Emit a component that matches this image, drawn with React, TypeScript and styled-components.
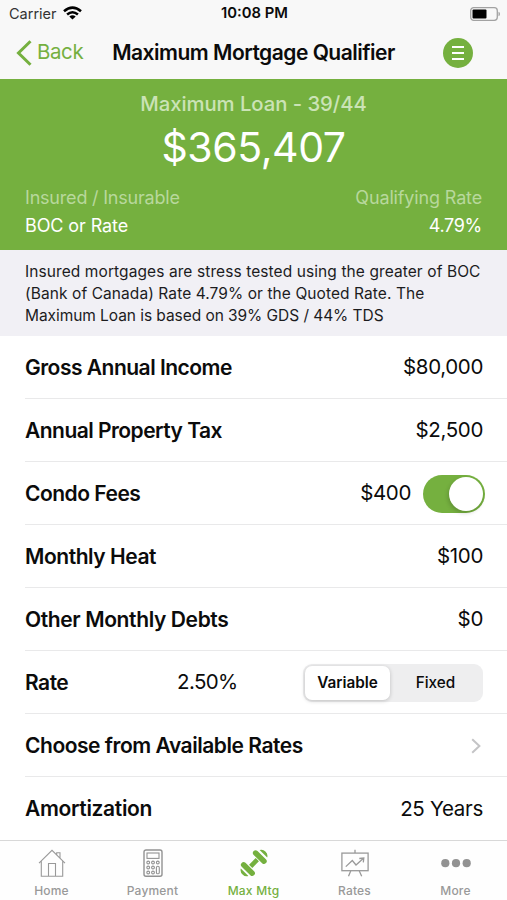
import React from "react";
import styled, { createGlobalStyle } from "styled-components";

const GREEN = "#75b03f";

const GlobalStyle = createGlobalStyle`
  *, *::before, *::after { box-sizing: border-box; }
  body { margin: 0; background: #fff; }
`;

const Screen = styled.div`
  width: 507px;
  height: 900px;
  display: flex;
  flex-direction: column;
  overflow: hidden;
  background: #fff;
  color: #0b0b0b;
  font-family: Inter, "Liberation Sans", sans-serif;
`;

const Text = styled.span<{
  $size: number;
  $weight?: number;
  $spacing?: number;
  $color?: string;
  $line?: number;
}>`
  font-size: ${(p) => p.$size}px;
  font-weight: ${(p) => p.$weight ?? 400};
  letter-spacing: ${(p) => p.$spacing ?? 0}px;
  color: ${(p) => p.$color ?? "inherit"};
  line-height: ${(p) => (p.$line ? `${p.$line}px` : "1.2")};
  white-space: nowrap;
`;

const StatusBar = styled.div`
  height: 27px;
  flex: none;
  display: grid;
  grid-template-columns: 1fr auto 1fr;
  align-items: center;
  padding: 0 7px 0 9px;
  background: #f8f8f8;
`;

const Carrier = styled.div`
  display: flex;
  align-items: center;
  gap: 6px;
`;

const BatterySlot = styled.div`
  display: flex;
  justify-content: flex-end;
`;

const NavBar = styled.header`
  height: 52px;
  flex: none;
  display: grid;
  grid-template-columns: 98px 1fr 98px;
  align-items: center;
  padding-bottom: 1px;
  background: #f8f8f8;
`;

const BackButton = styled.button`
  display: flex;
  align-items: center;
  gap: 5px;
  padding: 0 0 0 16px;
  border: 0;
  background: none;
  font-family: inherit;
  color: ${GREEN};
`;

const Title = styled.h1`
  margin: 0;
  display: flex;
  justify-content: center;
`;

const MenuButton = styled.button`
  justify-self: center;
  width: 30px;
  height: 30px;
  padding: 0;
  border: 0;
  border-radius: 50%;
  background: ${GREEN};
  display: flex;
  flex-direction: column;
  align-items: center;
  justify-content: center;
  gap: 4px;
`;

const MenuBar = styled.span`
  width: 12px;
  height: 2px;
  background: #fff;
`;

const Summary = styled.section`
  height: 171px;
  flex: none;
  display: flex;
  flex-direction: column;
  align-items: center;
  padding: 12px 25px 0;
  background: ${GREEN};
  color: #fff;
`;

const Amount = styled.div`
  display: flex;
  padding-top: 3px;
`;

const SummaryGrid = styled.div`
  width: 100%;
  margin-top: 10px;
  display: grid;
  grid-template-columns: auto auto;
  justify-content: space-between;

  & > :nth-child(even) { justify-self: end; }
`;

const Note = styled.section`
  height: 86px;
  flex: none;
  display: flex;
  flex-direction: column;
  align-items: flex-start;
  padding: 11px 25px 0;
  background: #f1f0f5;
  color: #1c1c1e;
`;

const List = styled.main`
  flex: none;
  padding-left: 25px;
`;

const Row = styled.div`
  height: 63px;
  display: flex;
  align-items: center;
  padding: 1px 24px 0 0;
  border-bottom: 1px solid #e9e9ea;

  &:last-child { border-bottom: 0; }
`;

const Spacer = styled.div`
  flex: 1;
`;

const RateValue = styled.div`
  width: 126px;
  display: flex;
`;

const Toggle = styled.div`
  width: 62px;
  height: 38px;
  margin: 0 -2px 0 12px;
  padding: 2px;
  border-radius: 19px;
  background: ${GREEN};
  display: flex;
  justify-content: flex-end;
`;

const Knob = styled.div`
  width: 34px;
  height: 34px;
  border-radius: 50%;
  background: #fff;
  box-shadow: -1px 2px 4px rgba(0, 0, 0, 0.18);
`;

const Segmented = styled.div`
  width: 180px;
  height: 38px;
  padding: 2px;
  border-radius: 9px;
  background: #eeeeef;
  display: grid;
  grid-template-columns: 85px 1fr;
`;

const Segment = styled.div<{ $active?: boolean }>`
  display: flex;
  align-items: center;
  justify-content: center;
  padding-top: 1px;
  border-radius: 7px;
  background: ${(p) => (p.$active ? "#fff" : "transparent")};
  box-shadow: ${(p) => (p.$active ? "0 1px 4px rgba(0, 0, 0, 0.2)" : "none")};
`;

const TabBar = styled.nav`
  height: 60px;
  flex: none;
  display: grid;
  grid-template-columns: repeat(5, 101px);
  justify-content: center;
  border-top: 1px solid #d8d8d8;
  background: #fefefe;
`;

const Tab = styled.div<{ $active?: boolean }>`
  display: flex;
  flex-direction: column;
  align-items: center;
  padding-top: 8px;
  gap: 6px;
  color: ${(p) => (p.$active ? GREEN : "#999")};
`;

const WifiIcon = () => (
  <svg width="19" height="14" viewBox="0 0 19 14" fill="none" stroke="#000" strokeWidth="2.6">
    <path d="M1 5.2Q9.5-2 18 5.2" />
    <path d="M4.1 8.5Q9.5 4 14.9 8.5" />
    <path d="M9.5 13.6L6.3 10.5Q9.5 8 12.7 10.5Z" fill="#000" stroke="none" />
  </svg>
);

const BatteryIcon = () => (
  <svg width="30" height="14" viewBox="0 0 30 14">
    <rect x="0.7" y="0.7" width="26.6" height="12.6" rx="3" fill="none" stroke="#a2a2a2" strokeWidth="1.3" />
    <rect x="2.5" y="2.4" width="14" height="9.2" rx="1" fill="#000" />
    <path d="M28.5 4.7Q30 5.2 30 7T28.5 9.3Z" fill="#a2a2a2" />
  </svg>
);

const BackIcon = () => (
  <svg width="16" height="26" viewBox="0 0 16 26" fill="none" stroke={GREEN} strokeWidth="3">
    <path d="M14.5 1.3L2.5 13L14.5 24.7" />
  </svg>
);

const ChevronIcon = () => (
  <svg width="12" height="16" viewBox="0 0 12 16" fill="none" stroke="#c4c4c6" strokeWidth="2">
    <path d="M1.2 1.2L8.4 8L1.2 14.8" />
  </svg>
);

const HomeIcon = () => (
  <svg width="28" height="28" viewBox="0 0 28 28" fill="none" stroke="#999" strokeWidth="1.1">
    <path d="M1 14.2L14 1.3L27 14.2M3.3 12.2V27.3H24.7V12.2M18.7 6V3.8H22V9.2M10.5 27V14.5H17.5V27" />
  </svg>
);

const CalculatorIcon = () => (
  <svg width="28" height="28" viewBox="0 0 28 28" fill="none" stroke="#929292" strokeWidth="1.1">
    <rect x="5" y="1" width="18" height="26.3" rx="2" strokeWidth="1.4" />
    <rect x="8" y="4" width="12" height="5.4" />
    <circle cx="9.2" cy="13.5" r="1.4" />
    <circle cx="14" cy="13.5" r="1.4" />
    <circle cx="18.8" cy="13.5" r="1.4" />
    <circle cx="9.2" cy="18.5" r="1.4" />
    <circle cx="14" cy="18.5" r="1.4" />
    <circle cx="9.2" cy="23.5" r="1.4" />
    <circle cx="14" cy="23.5" r="1.4" />
    <rect x="17.4" y="17.3" width="2.9" height="7.5" rx="1.4" />
  </svg>
);

const DumbbellIcon = () => (
  <svg width="28" height="28" viewBox="0 0 28 28" fill="none" stroke={GREEN} strokeLinecap="round">
    <path d="M15.6 4L24 12.2M3.6 15.8L12.2 24.2" strokeWidth="5.4" />
    <path d="M10.7 17.3L17.3 10.7" strokeWidth="4.6" strokeLinecap="butt" />
    <path d="M19.6 1Q23-.2 25.4 2.6Q28.2 5 27.2 8.6ZM.8 19.4Q-.2 23 2.6 25.4Q5 28 8.4 27Z" fill={GREEN} stroke="none" />
  </svg>
);

const ChartBoardIcon = () => (
  <svg width="28" height="28" viewBox="0 0 28 28" fill="none" stroke="#999" strokeWidth="1.3">
    <rect x="0.9" y="4.1" width="26.2" height="17.6" />
    <path d="M14 0.8V4M9.7 22L7.5 27.2M18.3 22L20.7 27.2M4.8 17.6L11.3 11.5L15 16L22.5 9.2M18.3 9.5L22.8 9L22.3 13.3" />
  </svg>
);

const MoreIcon = () => (
  <svg width="30" height="28" viewBox="0 0 30 28" fill="#929292">
    <circle cx="4.3" cy="14.2" r="4.1" />
    <circle cx="15" cy="14.2" r="4.1" />
    <circle cx="25.7" cy="14.2" r="4.1" />
  </svg>
);

const Label = ({ children, spacing = -0.5 }: { children: string; spacing?: number }) => (
  <Text $size={21} $weight={600} $spacing={spacing}>{children}</Text>
);

const Value = ({ children, spacing = -0.35 }: { children: string; spacing?: number }) => (
  <Text $size={20.5} $spacing={spacing}>{children}</Text>
);

const tabs = [
  { name: "Home", icon: <HomeIcon /> },
  { name: "Payment", icon: <CalculatorIcon /> },
  { name: "Max Mtg", icon: <DumbbellIcon />, active: true },
  { name: "Rates", icon: <ChartBoardIcon /> },
  { name: "More", icon: <MoreIcon /> },
];

export default function App() {
  return (
    <>
      <GlobalStyle />
      <Screen>
        <StatusBar>
          <Carrier>
            <Text $size={14.5} $color="#333">Carrier</Text>
            <WifiIcon />
          </Carrier>
          <Text $size={14.8} $weight={600}>10:08 PM</Text>
          <BatterySlot><BatteryIcon /></BatterySlot>
        </StatusBar>
        <NavBar>
          <BackButton>
            <BackIcon />
            <Text $size={20.5} $spacing={-0.4}>Back</Text>
          </BackButton>
          <Title>
            <Text $size={21} $weight={600} $spacing={-0.5}>Maximum Mortgage Qualifier</Text>
          </Title>
          <MenuButton aria-label="Menu">
            <MenuBar /><MenuBar /><MenuBar />
          </MenuButton>
        </NavBar>
        <Summary>
          <Text $size={20.3} $weight={500} $line={26} $spacing={-0.05} $color="#cbe3b6">Maximum Loan - 39/44</Text>
          <Amount>
            <Text $size={41} $line={54} $spacing={-0.4}>$365,407</Text>
          </Amount>
          <SummaryGrid>
            <Text $size={18} $line={28} $spacing={-0.2} $color="#b8d89c">Insured / Insurable</Text>
            <Text $size={18} $line={28} $spacing={-0.15} $color="#b8d89c">Qualifying Rate</Text>
            <Text $size={18} $line={28} $spacing={-0.1}>BOC or Rate</Text>
            <Text $size={18} $line={28} $spacing={-0.3}>4.79%</Text>
          </SummaryGrid>
        </Summary>
        <Note>
          <Text $size={15.5} $line={22} $spacing={0.09}>Insured mortgages are stress tested using the greater of BOC</Text>
          <Text $size={15.5} $line={22} $spacing={0.08}>(Bank of Canada) Rate 4.79% or the Quoted Rate. The</Text>
          <Text $size={15.5} $line={22} $spacing={-0.06}>Maximum Loan is based on 39% GDS / 44% TDS</Text>
        </Note>
        <List>
          <Row><Label spacing={-0.5}>Gross Annual Income</Label><Spacer /><Value>$80,000</Value></Row>
          <Row><Label spacing={-0.53}>Annual Property Tax</Label><Spacer /><Value>$2,500</Value></Row>
          <Row>
            <Label>Condo Fees</Label>
            <Spacer />
            <Value>$400</Value>
            <Toggle><Knob /></Toggle>
          </Row>
          <Row><Label spacing={-0.45}>Monthly Heat</Label><Spacer /><Value>$100</Value></Row>
          <Row><Label spacing={-0.38}>Other Monthly Debts</Label><Spacer /><Value>$0</Value></Row>
          <Row>
            <Label>Rate</Label>
            <Spacer />
            <RateValue><Value spacing={-0.6}>2.50%</Value></RateValue>
            <Segmented>
              <Segment $active><Text $size={15.3} $weight={600}>Variable</Text></Segment>
              <Segment><Text $size={15.3} $weight={500}>Fixed</Text></Segment>
            </Segmented>
          </Row>
          <Row><Label spacing={-0.47}>Choose from Available Rates</Label><Spacer /><ChevronIcon /></Row>
          <Row><Label spacing={-0.34}>Amortization</Label><Spacer /><Value spacing={-0.3}>25 Years</Value></Row>
        </List>
        <TabBar>
          {tabs.map((t) => (
            <Tab key={t.name} $active={t.active}>
              {t.icon}
              <Text $size={12} $weight={500} $spacing={0.2} $line={16}>{t.name}</Text>
            </Tab>
          ))}
        </TabBar>
      </Screen>
    </>
  );
}
